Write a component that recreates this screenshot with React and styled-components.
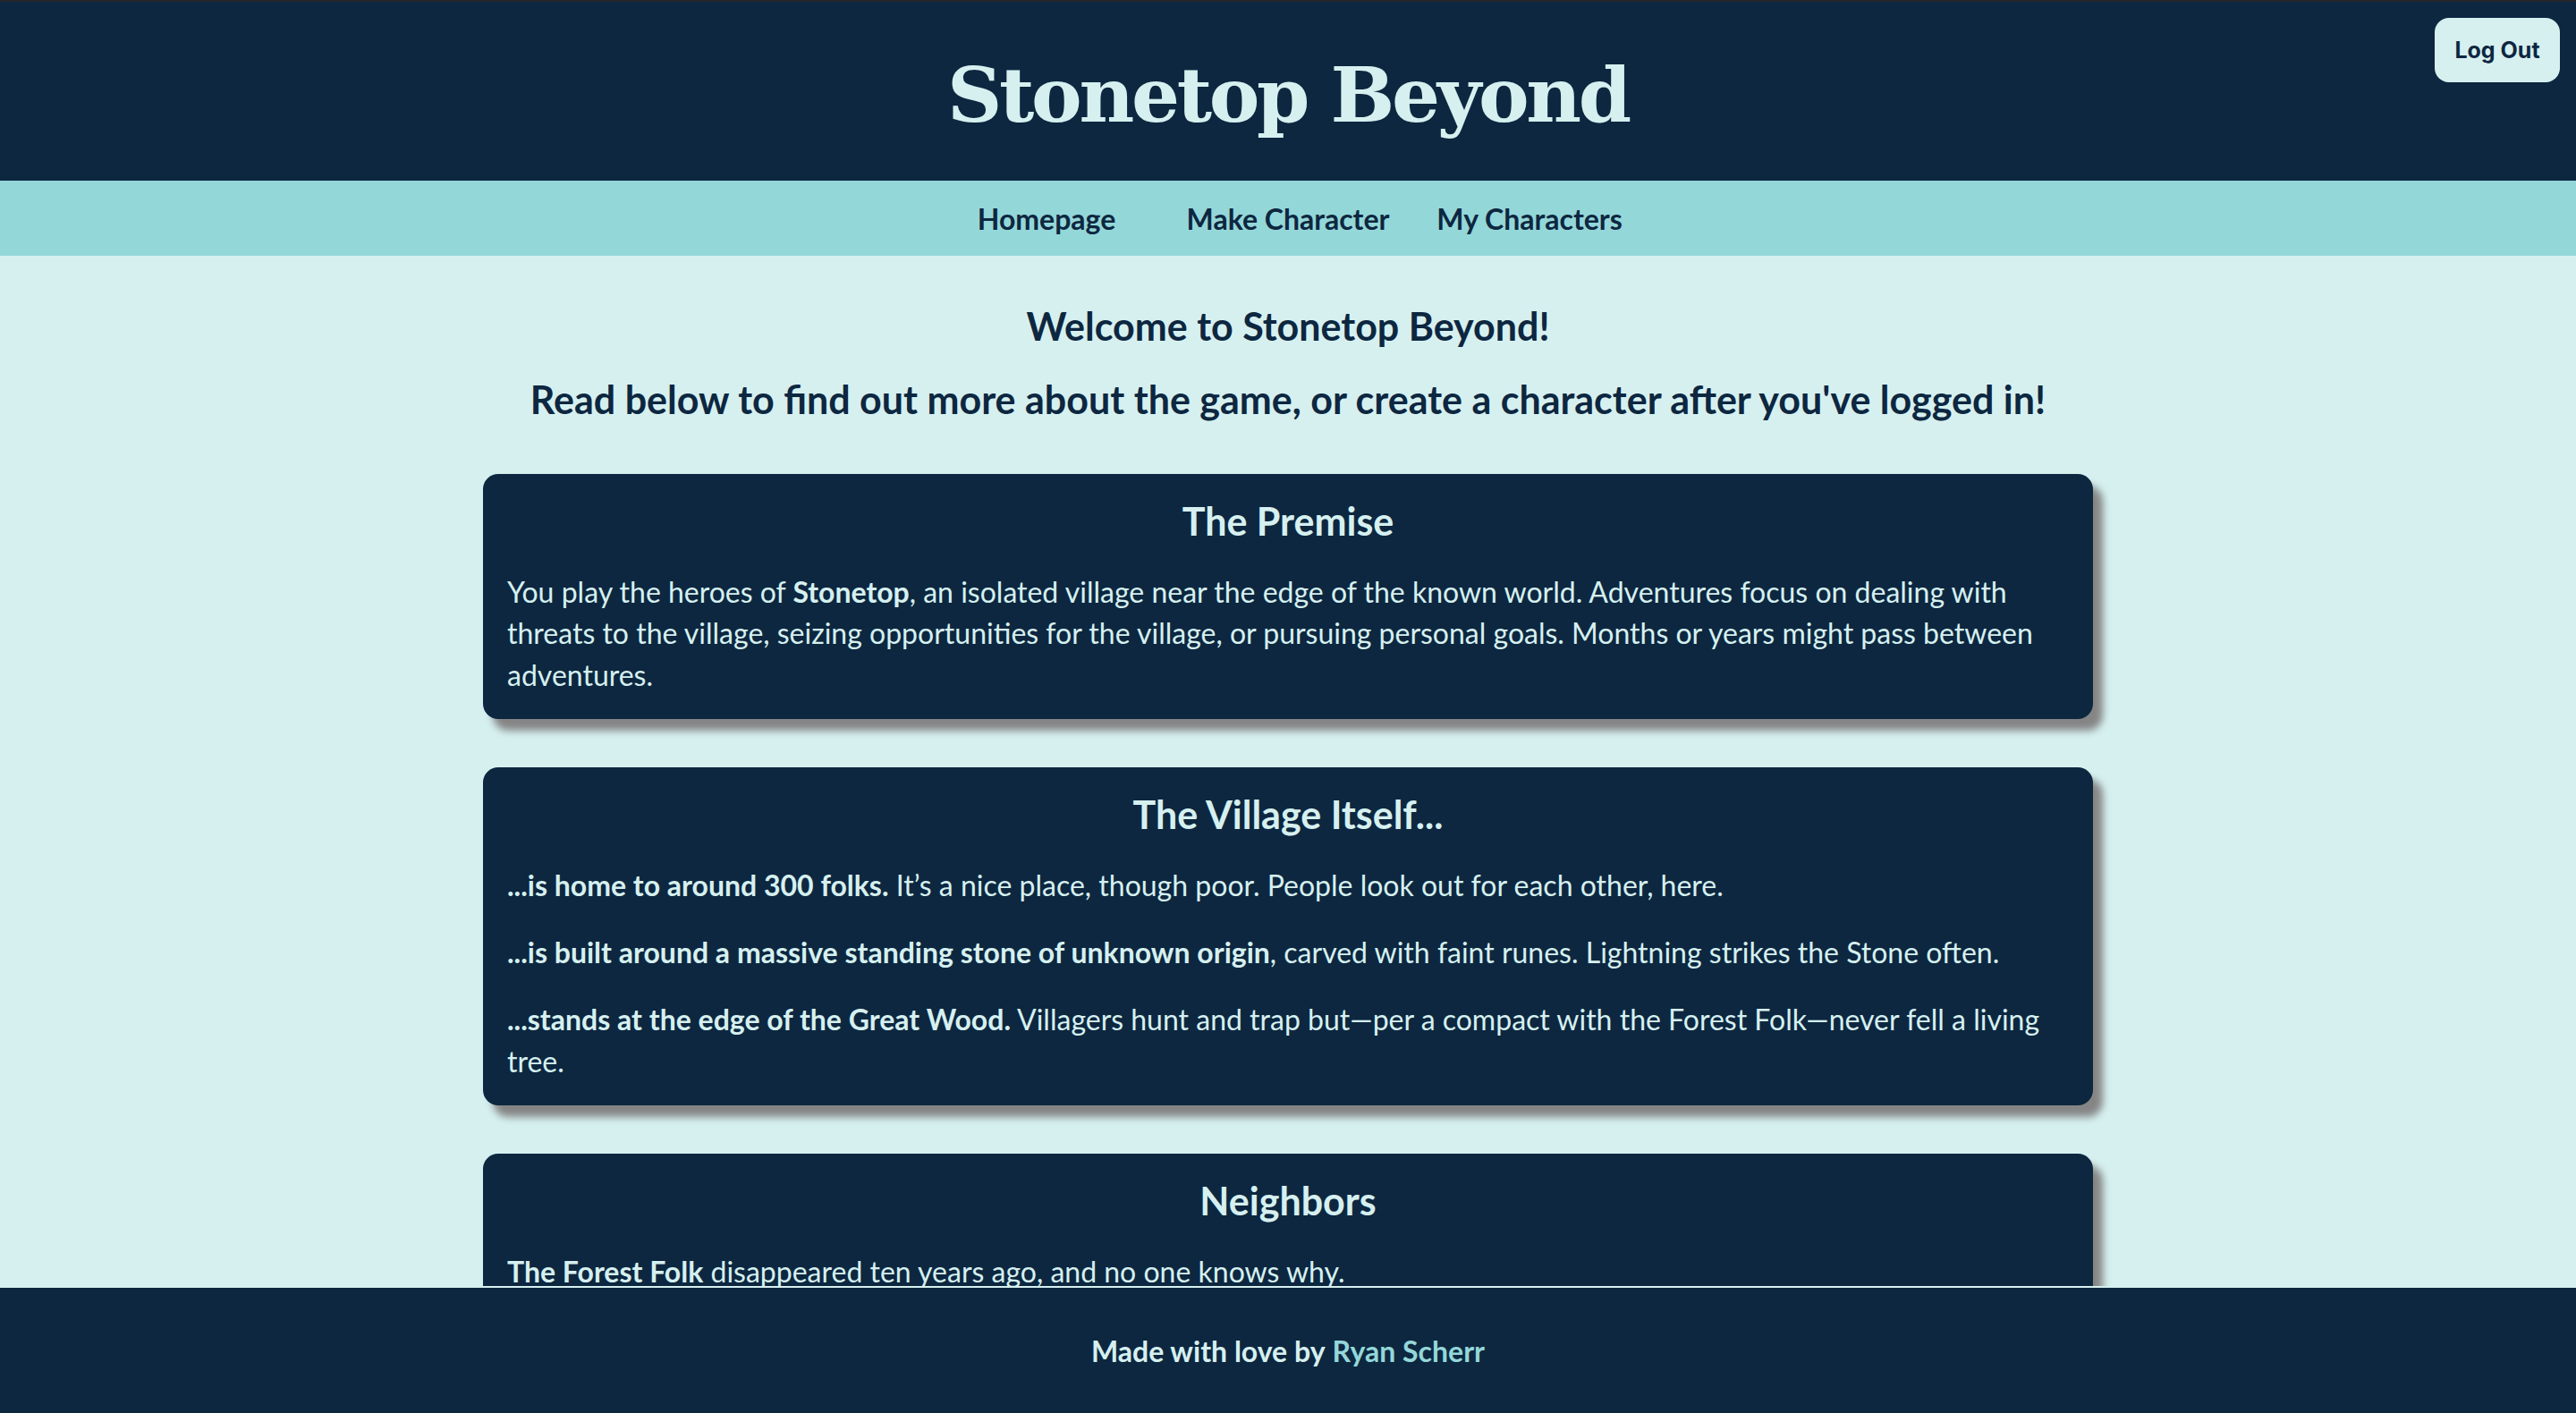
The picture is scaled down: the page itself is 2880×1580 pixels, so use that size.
import React from 'react';
import styled, { createGlobalStyle } from 'styled-components';

const navy = '#0d2740';
const mist = '#d6f0f0';
const teal = '#94d7d9';

const GlobalStyle = createGlobalStyle`
  * { box-sizing: border-box; }
  html, body {
    margin: 0;
    padding: 0;
    background: ${mist};
    font-family: Lato, "Noto Sans", sans-serif;
  }
`;

const Page = styled.div`
  height: 100vh;
  display: flex;
  flex-direction: column;
`;

const Header = styled.header`
  position: relative;
  flex: 0 0 202px;
  border-top: 2px solid #24262b;
  background: ${navy};
  display: flex;
  align-items: center;
  justify-content: center;
`;

const SiteTitle = styled.h1`
  margin: 8px 0 0;
  font-family: "DejaVu Serif", "Liberation Serif", serif;
  font-weight: 700;
  font-size: 85px;
  letter-spacing: -3.3px;
  line-height: 1;
  color: ${mist};
`;

const LogOutButton = styled.button`
  position: absolute;
  top: 18px;
  right: 18px;
  width: 140px;
  height: 72px;
  border: none;
  border-radius: 16px;
  background: ${mist};
  color: ${navy};
  font-family: Inter, Roboto, sans-serif;
  font-weight: 700;
  font-size: 25px;
  cursor: pointer;
`;

const Nav = styled.nav`
  flex: 0 0 84px;
  background: ${teal};
  display: grid;
  grid-template-columns: repeat(3, 270px);
  justify-content: center;
  align-items: center;
`;

const NavLink = styled.a`
  text-align: center;
  font-weight: 700;
  font-size: 32px;
  color: ${navy};
  text-decoration: none;
`;

const Main = styled.main`
  flex: 1;
  overflow-y: auto;
  scrollbar-width: none;
  padding-top: 53px;
`;

const Intro = styled.h2`
  margin: 0 0 ${p => p.$gap}px;
  text-align: center;
  font-weight: 700;
  font-size: 43px;
  line-height: 1.2;
  color: ${navy};
`;

const Cards = styled.div`
  width: 1800px;
  margin: 0 auto;
  display: flex;
  flex-direction: column;
  gap: 54px;
  padding-bottom: 60px;
`;

const Card = styled.section`
  background: ${navy};
  color: ${mist};
  border-radius: 17px;
  padding: 27px 27px 26px;
  box-shadow: 11px 13px 8px #858585;
`;

const CardTitle = styled.h3`
  margin: 0 0 30px;
  text-align: center;
  font-weight: 700;
  font-size: 43px;
  line-height: 1.2;
`;

const Para = styled.p`
  margin: 0 0 29px;
  font-size: 32px;
  line-height: 1.45;

  &:last-child {
    margin-bottom: 0;
  }

  b {
    font-weight: 700;
  }
`;

const Footer = styled.footer`
  flex: 0 0 142px;
  border-top: 2px solid ${mist};
  background: ${navy};
  display: flex;
  align-items: center;
  justify-content: center;
  font-weight: 700;
  font-size: 32px;
  color: ${mist};
`;

const FooterLink = styled.a`
  color: ${teal};
  text-decoration: none;
  margin-left: 0.25em;
`;

const App = () => (
  <Page>
    <GlobalStyle />
    <Header>
      <SiteTitle>Stonetop Beyond</SiteTitle>
      <LogOutButton>Log Out</LogOutButton>
    </Header>
    <Nav>
      <NavLink href="#">Homepage</NavLink>
      <NavLink href="#">Make Character</NavLink>
      <NavLink href="#">My Characters</NavLink>
    </Nav>
    <Main>
      <Intro $gap={30}>Welcome to Stonetop Beyond!</Intro>
      <Intro $gap={58}>Read below to find out more about the game, or create a character after you've logged in!</Intro>
      <Cards>
        <Card>
          <CardTitle>The Premise</CardTitle>
          <Para>
            You play the heroes of <b>Stonetop</b>, an isolated village near the edge of the known world. Adventures focus on dealing with threats to the village, seizing opportunities for the village, or pursuing personal goals. Months or years might pass between adventures.
          </Para>
        </Card>
        <Card>
          <CardTitle>The Village Itself...</CardTitle>
          <Para>
            <b>...is home to around 300 folks.</b> It’s a nice place, though poor. People look out for each other, here.
          </Para>
          <Para>
            <b>...is built around a massive standing stone of unknown origin</b>, carved with faint runes. Lightning strikes the Stone often.
          </Para>
          <Para>
            <b>...stands at the edge of the Great Wood.</b> Villagers hunt and trap but—per a compact with the Forest Folk—never fell a living tree.
          </Para>
        </Card>
        <Card>
          <CardTitle>Neighbors</CardTitle>
          <Para>
            <b>The Forest Folk</b> disappeared ten years ago, and no one knows why.
          </Para>
        </Card>
      </Cards>
    </Main>
    <Footer>
      Made with love by<FooterLink href="#">Ryan Scherr</FooterLink>
    </Footer>
  </Page>
);

export default App;
